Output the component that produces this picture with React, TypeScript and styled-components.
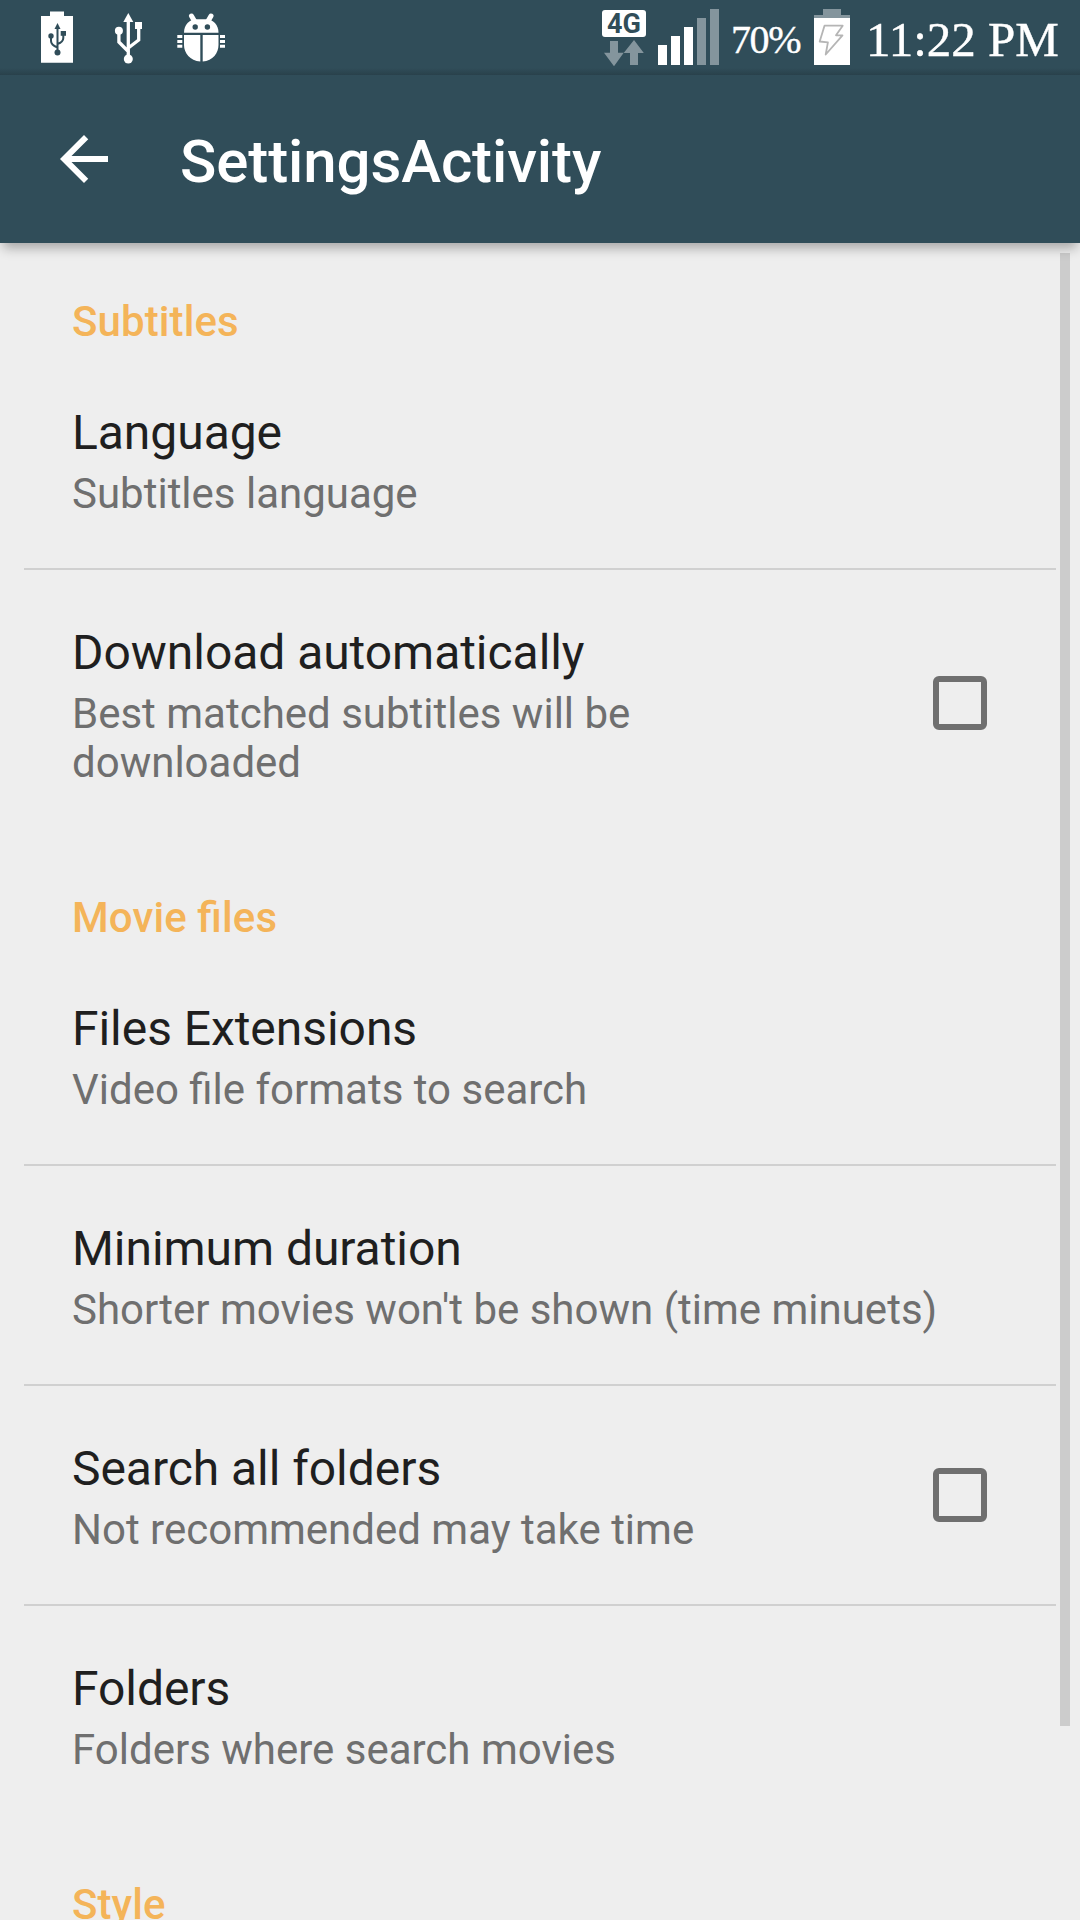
import React from "react";
import styled, { createGlobalStyle } from "styled-components";

const Global = createGlobalStyle`
  * { box-sizing: border-box; }
  body { margin: 0; background: #eeeeee; }
`;

const Screen = styled.div`
  width: 1080px;
  height: 1920px;
  display: flex;
  flex-direction: column;
  overflow: hidden;
  background: #eeeeee;
  font-family: Roboto, "Liberation Sans", sans-serif;
`;

const StatusBar = styled.header`
  height: 75px;
  flex: none;
  display: flex;
  justify-content: space-between;
  background: linear-gradient(#304d59 0, #304d59 68px, #29414b 75px);
`;

const StatusGroup = styled.div`
  display: flex;
  height: 75px;
`;

const StatusText = styled.span<{ $size: number; $width: number; $spacing: number; $line: number }>`
  width: ${(p) => p.$width}px;
  font-family: "Liberation Serif", "Times New Roman", serif;
  font-size: ${(p) => p.$size}px;
  letter-spacing: ${(p) => p.$spacing}px;
  line-height: ${(p) => p.$line}px;
  -webkit-text-stroke: 0.4px #fff;
  white-space: nowrap;
  color: #fff;
`;

const Network = styled.div`
  width: 44px;
  height: 57px;
  margin: 10px 12px 0 0;
  display: flex;
  flex-direction: column;
`;

const NetworkBadge = styled.span`
  height: 27px;
  border-radius: 3px;
  background: #fff;
  color: #304d59;
  font-size: 27px;
  font-weight: 700;
  line-height: 28px;
  text-align: center;
`;

const Toolbar = styled.div`
  height: 168px;
  flex: none;
  display: flex;
  align-items: center;
  padding-left: 48px;
  gap: 60px;
  background: #304d59;
  position: relative;
  z-index: 1;
  box-shadow: 0 8px 11px -3px rgba(0, 0, 0, 0.3);
  clip-path: inset(0 0 -30px 0);
`;

const Title = styled.h1`
  margin: 6px 0 0;
  font-size: 60px;
  font-weight: 500;
  letter-spacing: -0.1px;
  line-height: 70px;
  color: #fff;
`;

const List = styled.main`
  flex: 1;
  min-height: 0;
  position: relative;
  overflow: hidden;
  padding: 0 24px;
`;

const Scrollbar = styled.div`
  position: absolute;
  top: 10px;
  right: 10px;
  width: 10px;
  height: 1473px;
  background: #cccccc;
`;

const Category = styled.h2`
  margin: 0;
  height: 107px;
  padding: 54px 48px 0;
  font-size: 42px;
  font-weight: 500;
  letter-spacing: 0.1px;
  font-feature-settings: "liga" 1;
  line-height: 49px;
  color: #f4b459;
`;

const Row = styled.div<{ $last?: boolean }>`
  display: flex;
  align-items: center;
  justify-content: space-between;
  padding: 55px 69px 50px 48px;
  border-bottom: 2px solid ${(p) => (p.$last ? "transparent" : "#d0d0d0")};
`;

const RowText = styled.div<{ $narrow?: boolean }>`
  width: ${(p) => (p.$narrow ? "740px" : "auto")};
  white-space: ${(p) => (p.$narrow ? "normal" : "nowrap")};
`;

const RowTitle = styled.div`
  height: 64px;
  font-size: 48px;
  letter-spacing: -0.05px;
  line-height: 56px;
  color: #1f1f1f;
`;

const RowSummary = styled.div`
  max-width: 866px;
  font-size: 42px;
  line-height: 49px;
  color: #6f6f6f;
`;

const Checkbox = styled.span`
  flex: none;
  width: 54px;
  height: 54px;
  margin-top: -6px;
  border: 6px solid #6f6f6f;
  border-radius: 6px;
`;

type Item = { title: string; summary: string; check?: boolean };
const sections: { name: string; items: Item[] }[] = [
  {
    name: "Subtitles",
    items: [
      { title: "Language", summary: "Subtitles language" },
      { title: "Download automatically", summary: "Best matched subtitles will be downloaded", check: true },
    ],
  },
  {
    name: "Movie files",
    items: [
      { title: "Files Extensions", summary: "Video file formats to search" },
      { title: "Minimum duration", summary: "Shorter movies won't be shown (time minuets)" },
      { title: "Search all folders", summary: "Not recommended may take time", check: true },
      { title: "Folders", summary: "Folders where search movies" },
    ],
  },
  { name: "Style", items: [] },
];

const Notifications = () => (
  <svg width="240" height="75" viewBox="0 0 240 75" fill="#fff">
    {/* charging over USB */}
    <path d="M41 16h9v-4.500h14V16h9v46.700H41z" />
    <g fill="#304d59">
      <path d="M57.500 23l3 6h-6z" />
      <circle cx="57.500" cy="52.500" r="3" />
      <circle cx="51" cy="36" r="2.700" />
      <path d="M60.700 31h5.300v4.800h-5.300z" />
    </g>
    <path d="M57.500 28v24M51 36v5q0 4 6.500 6.500M63.300 35v3q0 4-5.800 6" fill="none" stroke="#304d59" strokeWidth="2" />
    {/* USB trident */}
    <path d="M128.300 13l5 9h-10z" />
    <circle cx="128.300" cy="59" r="4.500" />
    <circle cx="118.900" cy="30.700" r="4" />
    <path d="M135 22h7v7h-7z" />
    <path d="M128.300 20v36M118.900 31v11l9.400 9.500M138.700 28v12l-10.400 8" fill="none" stroke="#fff" strokeWidth="3.300" />
    {/* debugging bug */}
    <path d="M195 22l-3.500-6M207.500 22l3.500-6" stroke="#fff" strokeWidth="5" strokeLinecap="round" />
    <path d="M184 32.700c0-8 5.500-13.400 12-13.400h10.500c6.500 0 12 5.400 12 13.400z" />
    <g fill="#304d59"><circle cx="195.200" cy="27" r="2.700" /><circle cx="207.400" cy="27" r="2.700" /></g>
    <path d="M184 35h16.300v26.600C190 60.500 184 53 184 45zM202.700 35h15.800v10c0 8-5.500 15.500-15.800 16.600z" />
    <path d="M177.300 35h5v3h-5zM177.300 40h5v3h-5zM177.300 44.700h5v3h-5zM220 35h5v3h-5zM220 40h5v3h-5zM220 44.700h5v3h-5z" />
  </svg>
);

const DataArrows = () => (
  <svg width="44" height="30" viewBox="602 37 44 30" fill="#84959d">
    <path d="M610 41h8v11.700h5.700L614 66.300l-10-13.600h6zM634 40l9.800 12.900H638V65h-8V52.900h-6.300z" />
  </svg>
);

const Signal = () => (
  <svg width="73" height="75" viewBox="658 0 73 75">
    <path d="M658 45h9v20h-9zM671 36h9v29h-9zM684 27h9v38h-9z" fill="#fff" />
    <path d="M697 18h9v47h-9zM710 9h9v56h-9z" fill="#84959d" />
  </svg>
);

const Battery = () => (
  <svg width="52" height="75" viewBox="814 0 52 75">
    <path d="M814 18v-3h9V9h18v6h9v3z" fill="#84959d" />
    <path d="M814 18h36v47h-36z" fill="#fff" />
    <path d="M824.500 25.700h18.200l-6.700 9.600h6.500L825.700 54.500l2.200-12.200-8.200-.8z" fill="none" stroke="#b5b5b5" strokeWidth="1.800" strokeLinejoin="round" />
  </svg>
);

export default function App() {
  return (
    <Screen>
      <Global />
      <StatusBar>
        <StatusGroup><Notifications /></StatusGroup>
        <StatusGroup>
          <Network><NetworkBadge>4G</NetworkBadge><DataArrows /></Network>
          <Signal />
          <StatusText $size={40} $width={83} $spacing={-1.4} $line={80}>70%</StatusText>
          <Battery />
          <StatusText $size={49} $width={214} $spacing={0} $line={80}>11:22 PM</StatusText>
        </StatusGroup>
      </StatusBar>
      <Toolbar>
        <svg width="72" height="72" viewBox="0 0 24 24" fill="#fff">
          <path d="M20 11H7.830l5.590-5.590L12 4l-8 8 8 8 1.410-1.410L7.830 13H20v-2z" />
        </svg>
        <Title>SettingsActivity</Title>
      </Toolbar>
      <List>
        {sections.map((s) => (
          <React.Fragment key={s.name}>
            <Category>{s.name}</Category>
            {s.items.map((it, i) => (
              <Row key={it.title} $last={i === s.items.length - 1}>
                <RowText $narrow={it.check}>
                  <RowTitle>{it.title}</RowTitle>
                  <RowSummary>{it.summary}</RowSummary>
                </RowText>
                {it.check && <Checkbox />}
              </Row>
            ))}
          </React.Fragment>
        ))}
        <Scrollbar />
      </List>
    </Screen>
  );
}
